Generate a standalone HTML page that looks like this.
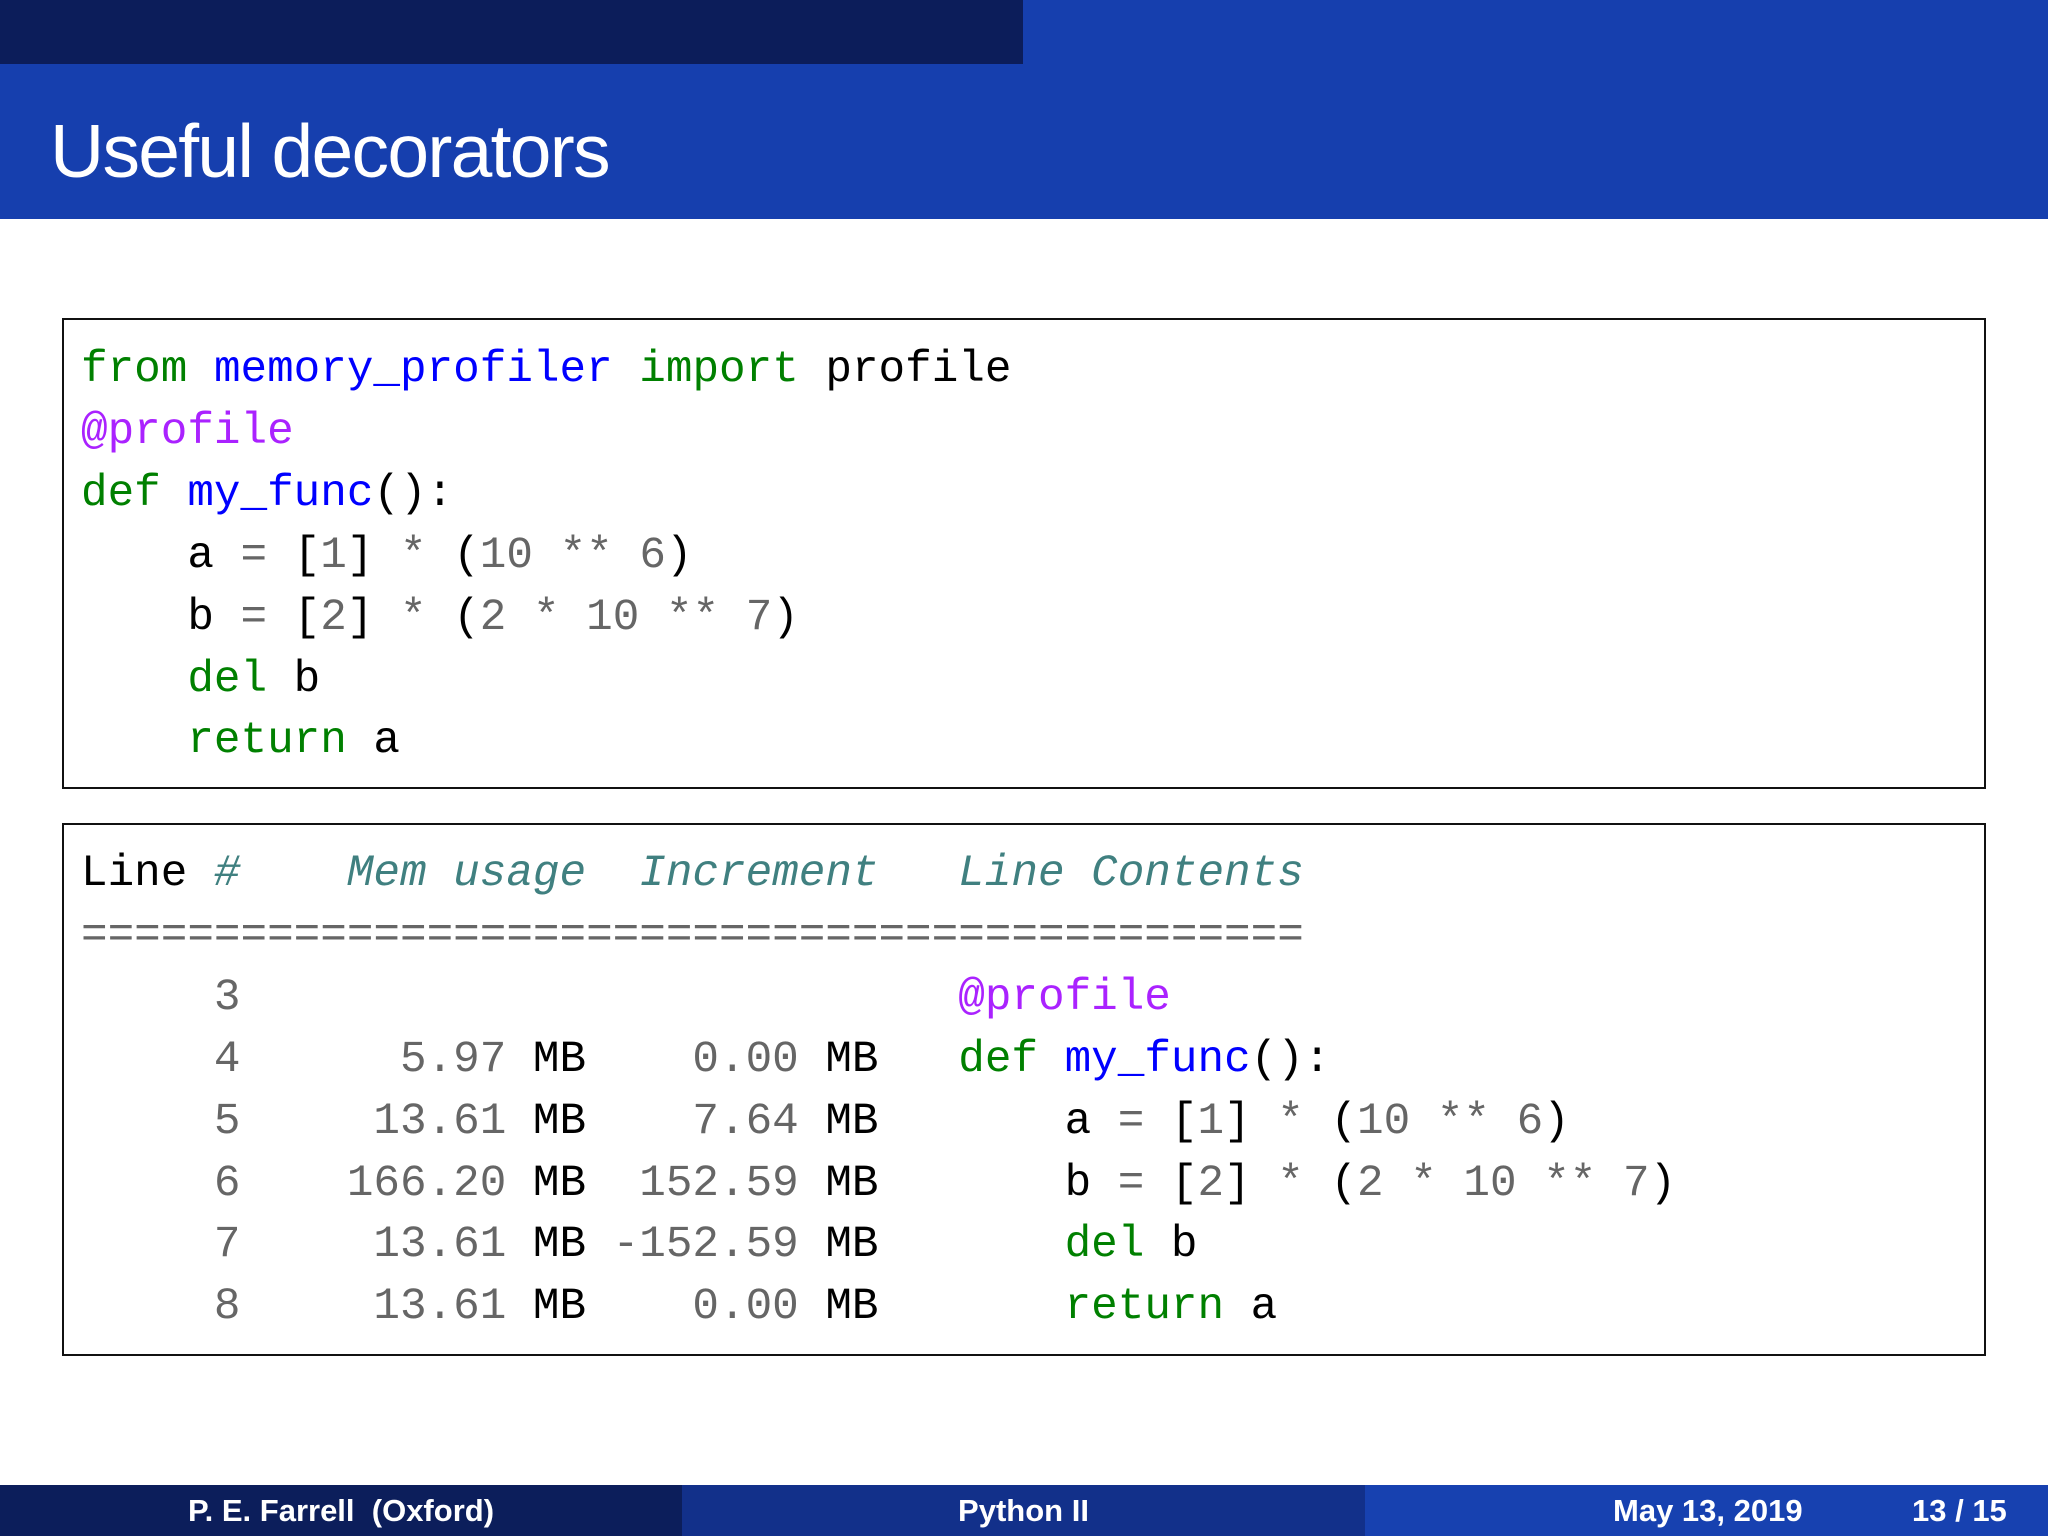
<!DOCTYPE html>
<html><head><meta charset="utf-8"><style>
body{margin:0;width:2048px;height:1536px;background:#fff;position:relative;overflow:hidden;font-family:"Liberation Sans",sans-serif}
.hdr{position:absolute;left:0;top:0;width:2048px;height:219px;background:#163fae}
.dk{position:absolute;left:0;top:0;width:1023px;height:64px;background:#0c1d5a}
.title{position:absolute;left:50px;top:101px;font-size:75px;color:#fff;letter-spacing:-1.7px;line-height:100px}
.box{position:absolute;left:62px;width:1920px;border:2px solid #111;box-sizing:content-box}
pre{position:absolute;left:81px;margin:0;font-family:"Liberation Mono",monospace;font-size:44.3px;line-height:61.9px;color:#000}
.k{color:#008000}.n{color:#0000ff}.d{color:#aa22ff}.g{color:#666}.c{color:#408080;font-style:italic}
.ft{position:absolute;top:1485px;height:51px;color:#fff;font-weight:bold;font-size:31px;line-height:51px;text-align:center}
</style></head><body>
<div class="hdr"></div><div class="dk"></div>
<div class="title">Useful decorators</div>
<div class="box" style="top:318px;height:467px"></div>
<pre style="top:340px"><span class="k">from</span> <span class="n">memory_profiler</span> <span class="k">import</span> profile
<span class="d">@profile</span>
<span class="k">def</span> <span class="n">my_func</span>():
    a <span class="g">=</span> [<span class="g">1</span>] <span class="g">*</span> (<span class="g">10</span> <span class="g">**</span> <span class="g">6</span>)
    b <span class="g">=</span> [<span class="g">2</span>] <span class="g">*</span> (<span class="g">2</span> <span class="g">*</span> <span class="g">10</span> <span class="g">**</span> <span class="g">7</span>)
    <span class="k">del</span> b
    <span class="k">return</span> a</pre>
<div class="box" style="top:823px;height:529px"></div>
<pre style="top:844px">Line <span class="c">#    Mem usage  Increment   Line Contents</span>
<span class="g">==============================================</span>
<span class="g">     3</span>                           <span class="d">@profile</span>
<span class="g">     4      5.97</span> MB <span class="g">   0.00</span> MB   <span class="k">def</span> <span class="n">my_func</span>():
<span class="g">     5     13.61</span> MB <span class="g">   7.64</span> MB       a <span class="g">=</span> [<span class="g">1</span>] <span class="g">*</span> (<span class="g">10</span> <span class="g">**</span> <span class="g">6</span>)
<span class="g">     6    166.20</span> MB <span class="g"> 152.59</span> MB       b <span class="g">=</span> [<span class="g">2</span>] <span class="g">*</span> (<span class="g">2</span> <span class="g">*</span> <span class="g">10</span> <span class="g">**</span> <span class="g">7</span>)
<span class="g">     7     13.61</span> MB <span class="g">-152.59</span> MB       <span class="k">del</span> b
<span class="g">     8     13.61</span> MB <span class="g">   0.00</span> MB       <span class="k">return</span> a</pre>
<div class="ft" style="left:0;width:682px;background:#0c1e5b">P. E. Farrell&nbsp; (Oxford)</div>
<div class="ft" style="left:682px;width:683px;background:#12308a">Python II</div>
<div class="ft" style="left:1365px;width:683px;background:#1741b0"><span style="position:absolute;left:248px">May 13, 2019</span><span style="position:absolute;left:547px">13 / 15</span></div>
</body></html>
